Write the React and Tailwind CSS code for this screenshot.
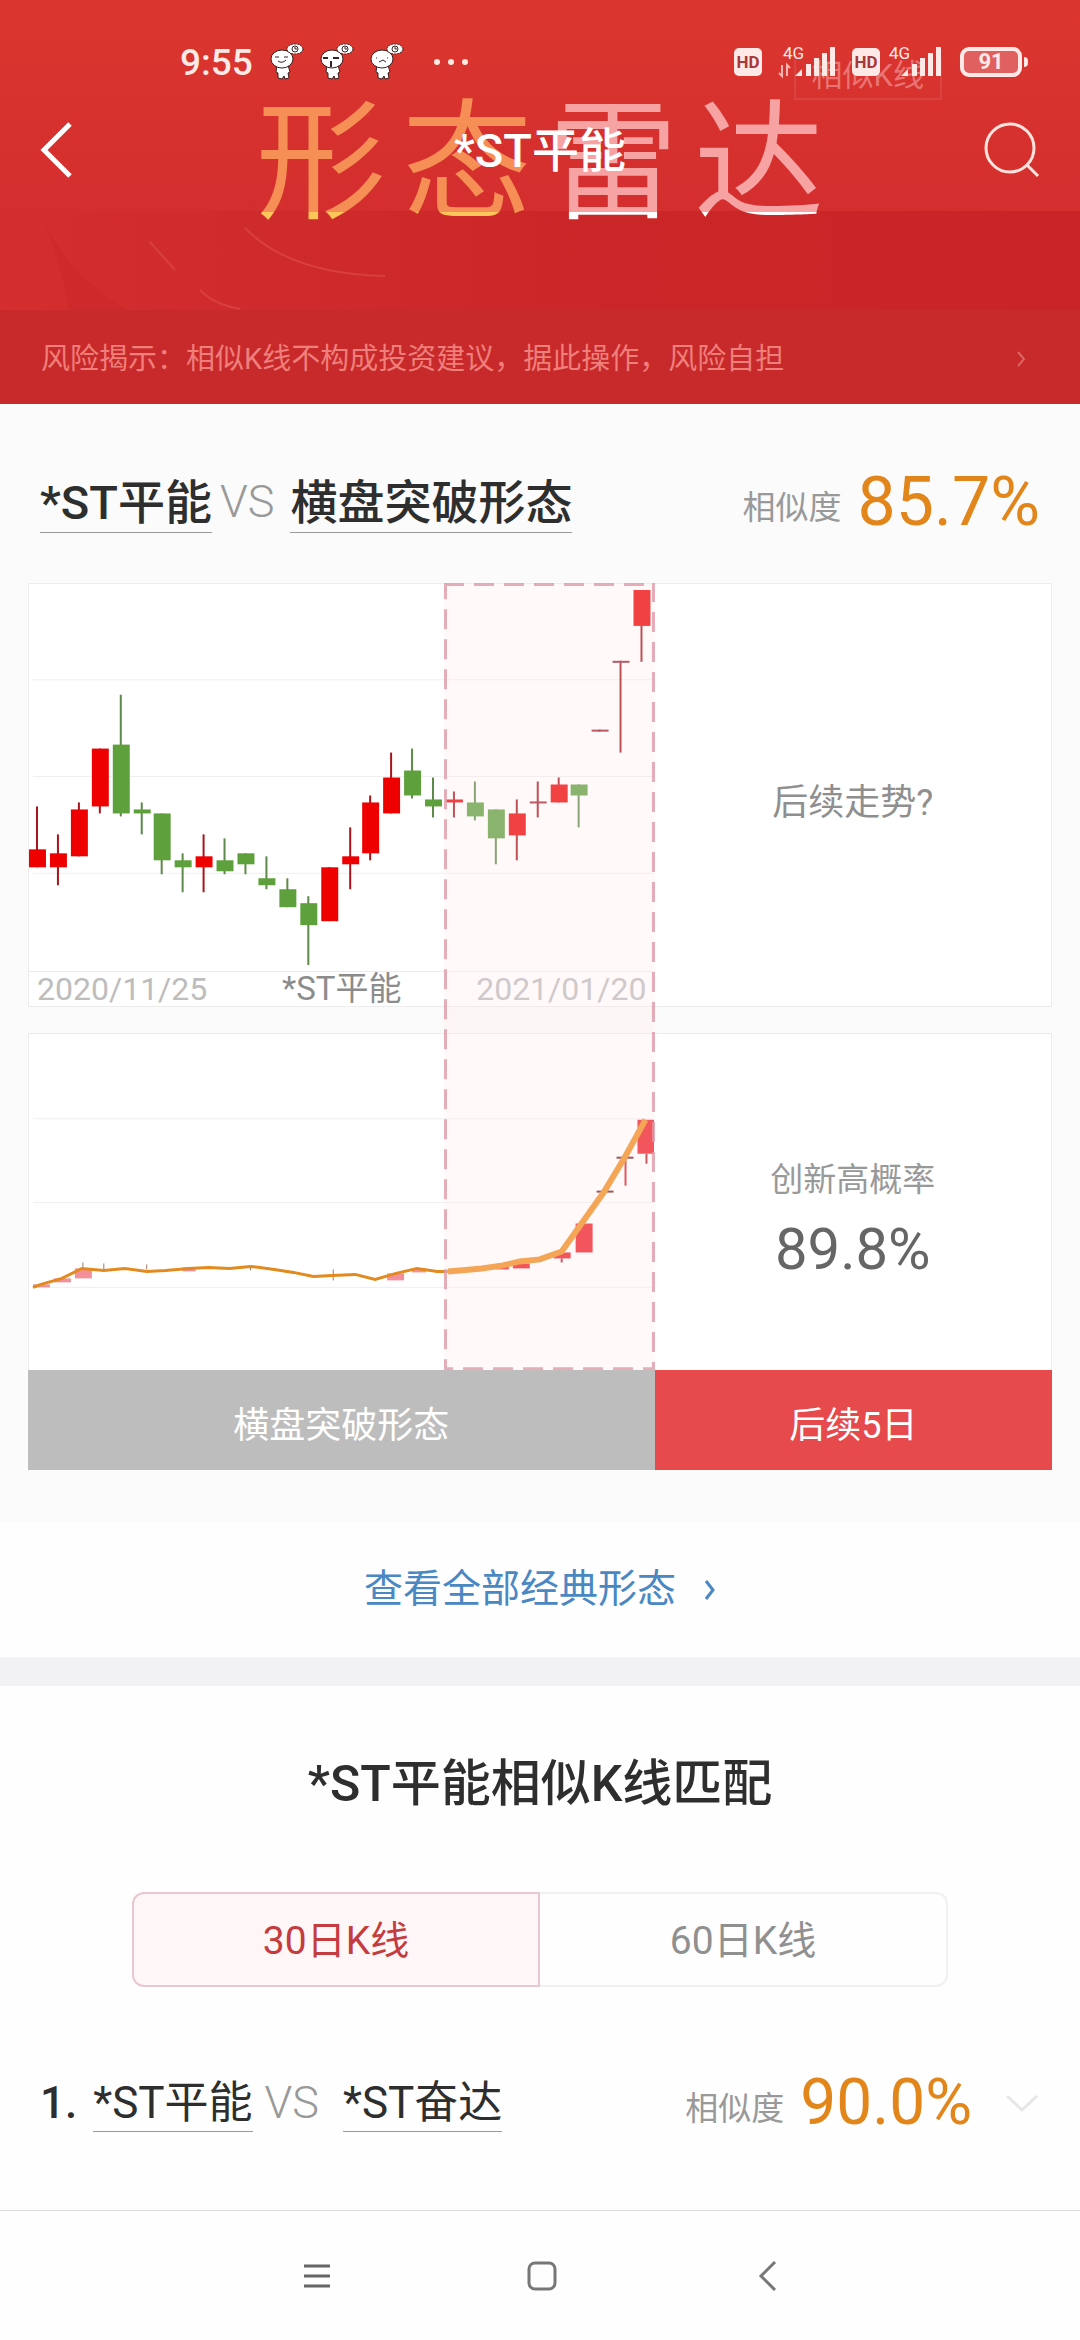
import { useState } from 'react'

// [high, top, bottom, low, rising] in chart units, top of the panel is 0
const CANDLES = [
  [223, 266, 284, 284, true],
  [251, 270, 284, 302, true],
  [219, 226, 273, 273, true],
  [165, 165, 223, 230, true],
  [111, 161, 230, 233, false],
  [219, 226, 230, 251, false],
  [230, 230, 277, 291, false],
  [270, 277, 284, 309, false],
  [251, 273, 284, 309, true],
  [255, 277, 288, 291, false],
  [270, 270, 281, 291, false],
  [273, 295, 302, 306, false],
  [295, 306, 324, 324, false],
  [313, 320, 342, 382, false],
  [284, 284, 338, 338, true],
  [244, 273, 281, 306, true],
  [212, 219, 270, 277, true],
  [169, 194, 230, 230, true],
  [165, 187, 212, 215, false],
  [194, 216, 223, 234, false],
  [208, 216, 219, 234, true],
  [198, 219, 233, 237, false],
  [226, 226, 255, 281, false],
  [216, 230, 252, 277, true],
  [198, 218, 220, 234, true],
  [194, 201, 219, 219, true],
  [201, 201, 212, 244, false],
  [146, 146, 148, 148, true],
  [77, 77, 79, 169, true],
  [6, 6, 42, 78, true],
]

// [x, y, width, height, colour]
const PATTERN_BARS = [
  [4, 251, 17, 3, '#f0919b'],
  [25, 245, 17, 4, '#f0919b'],
  [46, 235, 17, 10, '#f4909c'],
  [154, 234, 13, 4, '#f0919b'],
  [359, 240, 17, 7, '#f4909c'],
  [384, 235, 14, 4, '#f0919b'],
  [468, 233, 13, 3, '#ee1c24'],
  [485, 230, 17, 5, '#ee1c24'],
  [526, 219, 17, 6, '#ee1c24'],
  [533, 225, 2, 4, '#b5202a'],
  [548, 190, 17, 29, '#ee1c24'],
  [569, 157, 17, 2, '#7a1f22'],
  [589, 123, 17, 2, '#7a1f22'],
  [597, 124, 2, 28, '#d0202a'],
  [610, 86, 17, 34, '#ee1c24'],
  [618, 120, 2, 10, '#b5202a'],
]

const PATTERN_LINE =
  '4,254 12,251 33,245 53,235 75,237 96,235 118,238 137,237 160,235 180,234 201,235 222,233 246,236 265,239 285,243 304,242 327,241 347,246 368,240 389,235 409,238 420,238'
const BREAKOUT_LINE = '420,238 432,237 454,235 475,232 492,228 512,226 534,218 576,159 597,124 618,86'

function Sticker({ children }) {
  return (
    <svg aria-hidden="true" width="36" height="38" viewBox="0 0 36 38" fill="#fff" stroke="#3a2020" strokeWidth="1">
      <path d="M8 22 L7 29 L9 30 L9 35 L13 36 L15 33 L16 36 L20 35 L19 30 L21 29 L19 22 Z" />
      <ellipse cx="13" cy="16" rx="11" ry="9" />
      <ellipse cx="26" cy="6" rx="8" ry="5" strokeDasharray="2 1" />
      <circle cx="26" cy="6" r="3" />
      <path d="M26 4 V6 H28" fill="none" />
      {children}
    </svg>
  )
}

function HdBadge() {
  return (
    <span className="flex h-7 w-7 items-center justify-center rounded-[5px] bg-[#ffe9e6] text-[17px] font-bold leading-none text-[#a8383a]">
      HD
    </span>
  )
}

function Signal({ transfer }) {
  return (
    <svg aria-hidden="true" width="60" height="40" viewBox="0 0 60 40" fill="#ffe9e6">
      <text x="5" y="17" fontSize="17">4G</text>
      {transfer && <path d="M4 23 V34 L1 31 M9 34 V23 L12 26" stroke="#f5b5b0" strokeWidth="2" fill="none" />}
      <path d="M17 34 L24 27 V34 Z" />
      <rect x="28" y="22" width="5" height="12" />
      <rect x="36" y="16" width="5" height="18" />
      <rect x="44" y="11" width="5" height="23" />
      <rect x="52" y="5" width="5" height="29" />
    </svg>
  )
}

function StatusBar() {
  return (
    <div className="relative flex h-[100px] items-center justify-between pl-[180px] pr-[52px] pt-6">
      <div className="flex items-center">
        <span className="text-[37px] font-medium leading-none text-[#ffeae6]">9:55</span>
        <div className="ml-4 flex gap-[14px]">
          <Sticker>
            <path d="M6 14 H10 M15 14 H19 M9 18 Q13 21 17 17" fill="none" />
          </Sticker>
          <Sticker>
            <path d="M4 15 H9 M14 15 H20 M12 18 V24" fill="none" strokeWidth="2" />
          </Sticker>
          <Sticker>
            <path d="M7 15 H8 M18 15 H19 M10 19 L14 17 L17 19" fill="none" />
          </Sticker>
        </div>
        <svg aria-hidden="true" className="ml-7" width="36" height="8" viewBox="0 0 36 8" fill="#ffeae0">
          <circle cx="4" cy="4" r="3" />
          <circle cx="18" cy="4" r="3" />
          <circle cx="32" cy="4" r="3" />
        </svg>
      </div>
      <div className="flex items-center">
        <HdBadge />
        <span className="ml-4">
          <Signal transfer />
        </span>
        <span className="ml-[14px]">
          <HdBadge />
        </span>
        <span className="ml-1">
          <Signal />
        </span>
        <span className="ml-4 flex h-[30px] w-[62px] items-center justify-center rounded-[9px] border-4 border-[#ffe9e6] bg-[#e0605f] text-[22px] font-bold leading-none text-[#ffe9e6]">
          91
        </span>
        <span className="ml-[2px] h-[10px] w-1 rounded-r-sm bg-[#ffe9e6]" />
      </div>
    </div>
  )
}

function Banner() {
  return (
    <header className="relative bg-linear-to-b from-[#db362e] via-[#d42e2e] to-[#ce2a2b]">
      {/* Banner artwork behind the bars */}
      <div aria-hidden="true" className="absolute inset-0 overflow-hidden">
        <div className="absolute inset-x-0 bottom-[94px] top-[211px] bg-linear-to-r from-[#d42e2f] via-[#cb2729] to-[#c92528]" />
        <svg className="absolute left-0 top-[200px]" width="400" height="112" viewBox="0 0 400 112" fill="none">
          <path d="M40 10 Q60 70 130 112 H70 Q60 60 40 10Z" fill="#c92729" opacity="0.5" />
          <path d="M150 42 L175 70 M200 90 Q215 105 240 109 M245 28 Q290 74 385 76" stroke="#d8403d" strokeWidth="2" />
        </svg>
        <div className="absolute right-[138px] top-[58px] border-2 border-t-0 border-[#d94443] pb-1 pl-4 pr-4 text-[31px] leading-9 text-[#e87573]">
          相似K线
        </div>
        <div className="absolute inset-x-0 top-[92px] flex justify-center gap-4 text-[130px] leading-[144px] text-transparent">
          <span className="bg-linear-to-b from-[#f58f55] from-83% to-[#fdc658] to-83% bg-clip-text">形</span>
          <span className="bg-linear-to-b from-[#f58f55] from-83% to-[#fdc658] to-83% bg-clip-text">态</span>
          <span className="bg-linear-to-b from-[#f7a3a3] from-83% to-white to-83% bg-clip-text">雷</span>
          <span className="bg-linear-to-b from-[#f7a3a3] from-83% to-white to-83% bg-clip-text">达</span>
        </div>
      </div>

      <StatusBar />

      <div className="relative flex h-[100px] items-center justify-between px-10">
        <button type="button" aria-label="返回" className="w-14">
          <svg width="32" height="56" viewBox="0 0 32 56" fill="none" stroke="#fff" strokeWidth="5">
            <path d="M30 2 L4 28 L30 54" />
          </svg>
        </button>
        <h1 className="text-[47px] font-medium leading-none text-white">*ST平能</h1>
        <button type="button" aria-label="搜索" className="w-14">
          <svg width="56" height="56" viewBox="0 0 56 56" fill="none" stroke="#ffe3dc" strokeWidth="3">
            <circle cx="26" cy="26" r="24" />
            <path d="M43 43 L54 54" />
          </svg>
        </button>
      </div>

      <a href="#risk" className="relative mt-[110px] flex h-[94px] items-center justify-between bg-[#c8292a] pl-[41px] pr-[54px] pt-1 text-[#ee7f7b]">
        <span className="text-[29px] leading-none">风险揭示：相似K线不构成投资建议，据此操作，风险自担</span>
        <svg aria-hidden="true" width="10" height="16" viewBox="0 0 10 16" fill="none" stroke="#dc6462" strokeWidth="2">
          <path d="M2 1 L8 8 L2 15" />
        </svg>
      </a>
    </header>
  )
}

function Similarity({ value, large }) {
  return (
    <div className="flex items-center gap-4 leading-none">
      <span className="pt-3 text-[33px] text-[#999]">相似度</span>
      <span className={large ? 'text-[68px] text-[#e2861c]' : 'text-[64px] text-[#e2861c]'}>{value}</span>
    </div>
  )
}

function DailyChart() {
  return (
    <svg className="block w-full" viewBox="0 0 627 388" role="img" aria-label="*ST平能日K线">
      {[96, 193, 290].map((y) => (
        <line key={y} x1="4" x2="627" y1={y} y2={y} stroke="#efefef" strokeWidth="1" />
      ))}
      {CANDLES.map(([high, top, bottom, low, rising], i) => {
        const x = Math.round(i * 20.9)
        return (
          <g key={i} fill={rising ? '#ee0000' : '#5ea03c'}>
            <rect x={x + 7} y={high} width="2" height={low - high} fill={rising ? '#a8141c' : '#5d8a48'} />
            <rect x={x} y={top} width="17" height={bottom - top} fill={bottom - top < 3 ? '#a02030' : undefined} />
          </g>
        )
      })}
    </svg>
  )
}

function PatternChart() {
  return (
    <svg className="block w-full" viewBox="0 0 627 337" role="img" aria-label="横盘突破形态走势">
      {[85, 169, 254].map((y) => (
        <line key={y} x1="4" x2="627" y1={y} y2={y} stroke="#efefef" strokeWidth="1" />
      ))}
      {PATTERN_BARS.map(([x, y, w, h, fill]) => (
        <rect key={`${x}-${y}`} x={x} y={y} width={w} height={h} fill={fill} />
      ))}
      <path d="M54 229V236 M75 230V238 M118 231V236 M222 234V237 M305 236V247" stroke="#9a7a6a" strokeWidth="1" />
      <polyline points={PATTERN_LINE} fill="none" stroke="#e28a1e" strokeWidth="3" />
      <polyline points={BREAKOUT_LINE} fill="none" stroke="#f08c1c" strokeWidth="6" />
    </svg>
  )
}

function Comparison() {
  return (
    <section className="bg-[#fbfbfb] px-7 pb-[52px]">
      <div className="flex h-[179px] items-center justify-between pl-3 pr-3 pt-4">
        <div className="flex items-center text-[47px] leading-none text-[#2e2e2e]">
          <a href="#stock" className="border-b border-[#999] pb-1.5 pt-2 font-medium">*ST平能</a>
          <span className="mx-2 text-[45px] font-light text-[#999]">VS</span>
          <a href="#pattern" className="ml-2 border-b border-[#999] pb-1.5 pt-2 font-medium">横盘突破形态</a>
        </div>
        <Similarity value="85.7%" large />
      </div>

      <div className="relative">
        <div className="flex border border-[#ececec] bg-white">
          <div className="w-[61.2%]">
            <DailyChart />
            <div className="flex items-center justify-between border-t border-[#ececec] pl-2 pr-2 text-[32px] leading-[34px] text-[#bdbdbd]">
              <span>2020/11/25</span>
              <span className="text-[33px] text-[#8c8c8c]">*ST平能</span>
              <span>2021/01/20</span>
            </div>
          </div>
          <div className="flex flex-1 items-center justify-center pt-4 text-[36px] leading-none text-[#8f8f8f]">
            后续走势?
          </div>
        </div>

        <div className="mt-[26px] flex border border-b-0 border-[#ececec] bg-white">
          <div className="w-[61.2%]">
            <PatternChart />
          </div>
          <div className="flex flex-1 flex-col items-center justify-center gap-6 pt-9 leading-none">
            <span className="text-[33px] text-[#999]">创新高概率</span>
            <span className="text-[58px] text-[#666]">89.8%</span>
          </div>
        </div>

        {/* Matched period, drawn over both charts */}
        <svg aria-hidden="true" className="absolute left-[40.6%] top-0 h-full w-[20.6%]">
          <rect width="100%" height="100%" fill="#ffeaec" fillOpacity="0.28" stroke="#dd9aa6" strokeOpacity="0.8" strokeWidth="6" strokeDasharray="20 10" />
        </svg>
      </div>

      <div className="flex h-[100px] text-[36px] leading-none text-white">
        <div className="flex w-[61.2%] items-center justify-center bg-[#bdbdbd] pt-3">横盘突破形态</div>
        <div className="flex flex-1 items-center justify-center bg-[#e64a4c] pt-3">后续5日</div>
      </div>
    </section>
  )
}

function Matches() {
  const [period, setPeriod] = useState('30')
  const active = 'border-2 border-[#e8c8ce] bg-[#fff6f7] text-[#c43c3e]'
  const idle = 'border-2 border-[#f0f0f0] text-[#909090]'

  return (
    <section className="flex-1">
      <h2 className="pt-[73px] text-center text-[50px] font-medium leading-[50px] text-[#2e2e2e]">*ST平能相似K线匹配</h2>
      <div className="mx-[132px] mt-[83px] grid h-[95px] grid-cols-2 text-[39px] leading-none">
        <button type="button" aria-pressed={period === '30'} onClick={() => setPeriod('30')} className={`rounded-l-xl pt-1 ${period === '30' ? active : idle}`}>
          30日K线
        </button>
        <button type="button" aria-pressed={period === '60'} onClick={() => setPeriod('60')} className={`rounded-r-xl border-l-0 pt-1 ${period === '60' ? active : idle}`}>
          60日K线
        </button>
      </div>

      <div className="flex h-[223px] items-center justify-between pl-10 pr-10 pt-2">
        <div className="flex items-center text-[44px] leading-none text-[#2e2e2e]">
          <span className="font-medium">1.</span>
          <a href="#stock" className="ml-4 border-b border-[#999] pb-1.5 pt-2">*ST平能</a>
          <span className="mx-3 text-[45px] font-light text-[#999]">VS</span>
          <a href="#match" className="ml-3 border-b border-[#999] pb-1.5 pt-2">*ST奋达</a>
        </div>
        <div className="flex items-center gap-8">
          <Similarity value="90.0%" />
          <button type="button" aria-label="展开">
            <svg width="36" height="20" viewBox="0 0 36 20" fill="none" stroke="#e6e6e8" strokeWidth="3">
              <path d="M3 3 L18 17 L33 3" />
            </svg>
          </button>
        </div>
      </div>
    </section>
  )
}

function SystemNav() {
  return (
    <nav aria-label="系统导航" className="grid h-[130px] grid-cols-[1fr_auto_1fr] items-center gap-[196px] border-t border-[#dcdcdc] pl-1">
      <button type="button" aria-label="菜单" className="justify-self-end">
        <svg width="28" height="28" viewBox="0 0 28 28" stroke="#666" strokeWidth="3">
          <path d="M1 4 H27 M1 14 H27 M1 24 H27" />
        </svg>
      </button>
      <button type="button" aria-label="主屏幕">
        <svg width="30" height="30" viewBox="0 0 30 30" fill="none" stroke="#777" strokeWidth="3">
          <rect x="2" y="2" width="26" height="26" rx="6" />
        </svg>
      </button>
      <button type="button" aria-label="返回上一页" className="justify-self-start">
        <svg width="28" height="30" viewBox="0 0 28 30" fill="none" stroke="#777" strokeWidth="3">
          <path d="M22 1 L8 15 L22 29" />
        </svg>
      </button>
    </nav>
  )
}

export default function App() {
  return (
    <div className="flex min-h-screen flex-col bg-[#fefefe] font-[Roboto,'Noto_Sans_CJK_SC',sans-serif]">
      <Banner />
      <Comparison />
      <a href="#patterns" className="flex h-[136px] items-center justify-center gap-7 border-b border-[#f4f4f4] text-[39px] leading-none text-[#4a88c4]">
        查看全部经典形态
        <svg aria-hidden="true" width="12" height="20" viewBox="0 0 12 20" fill="none" stroke="#4a88c4" strokeWidth="3">
          <path d="M2 1 L9 10 L2 19" />
        </svg>
      </a>
      <div className="h-7 bg-[#f2f2f5]" />
      <Matches />
      <SystemNav />
    </div>
  )
}
